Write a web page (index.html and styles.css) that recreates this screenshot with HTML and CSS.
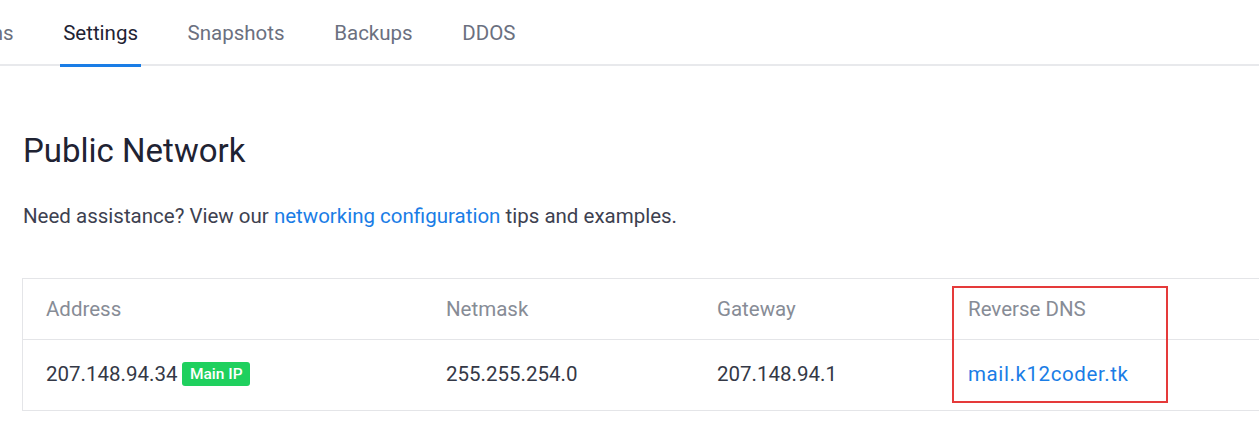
FILE: index.html
```html
<!DOCTYPE html>
<html>
<head>
<meta charset="utf-8">
<link rel="stylesheet" href="styles.css">
</head>
<body>
<nav class="tabs">
  <a class="tab">Usage Graphs</a>
  <a class="tab active">Settings</a>
  <a class="tab">Snapshots</a>
  <a class="tab">Backups</a>
  <a class="tab">DDOS</a>
</nav>
<main class="content">
  <h1 class="title">Public Network</h1>
  <p class="help">Need assistance? View our <a class="link">networking configuration</a> tips and examples.</p>
  <div class="table">
    <div class="row head">
      <div class="cell c1">Address</div>
      <div class="cell c2">Netmask</div>
      <div class="cell c3">Gateway</div>
      <div class="cell c4">Reverse DNS</div>
    </div>
    <div class="row body">
      <div class="cell c1">207.148.94.34<span class="badge">Main IP</span></div>
      <div class="cell c2">255.255.254.0</div>
      <div class="cell c3">207.148.94.1</div>
      <div class="cell c4"><a class="link dns">mail.k12coder.tk</a></div>
    </div>
    <div class="highlight"></div>
  </div>
</main>
</body>
</html>
```

FILE: styles.css
```css
html, body {
  margin: 0;
  padding: 0;
  background: #ffffff;
  overflow: hidden;
}
body {
  width: 1259px;
  height: 438px;
  font-family: Roboto, "Liberation Sans", sans-serif;
  color: #2b2f3a;
}
.tabs {
  display: flex;
  gap: 43.6px;
  height: 64px;
  border-bottom: 2px solid #e8e9ec;
  margin-left: -117px;
}
.tab {
  display: flex;
  align-items: center;
  padding: 2px 3px 0 3px;
  height: 67px;
  margin-bottom: -3px;
  box-sizing: border-box;
  font-size: 20.5px;
  color: #6b7080;
  border-bottom: 3px solid transparent;
  line-height: 1;
  white-space: nowrap;
}
.tab.active {
  color: #1f2333;
  border-bottom-color: #1a7de6;
}
.content {
  padding-left: 23px;
}
.title {
  margin: 65px 0 0 0;
  font-size: 33px;
  font-weight: 400;
  line-height: 40px;
  color: #1f2333;
}
.help {
  margin: 33px 0 0 0;
  font-size: 20.5px;
  line-height: 24px;
  color: #3d4150;
}
.link {
  color: #1a7de6;
  text-decoration: none;
}
.table {
  position: relative;
  margin-top: 50px;
  margin-left: -1px;
  width: 1300px;
  border: 1px solid #e4e5e8;
  border-right: none;
}
.row {
  display: flex;
  align-items: center;
}
.row.head {
  height: 60px;
  border-bottom: 1px solid #e4e5e8;
  color: #878c96;
}
.row.body {
  height: 70px;
  color: #343846;
}
.cell {
  font-size: 20.5px;
  display: flex;
  align-items: center;
}
.row.body .cell {
  padding-bottom: 2px;
}
.c1 { width: 400px; padding-left: 23px; }
.c2 { width: 271px; }
.c3 { width: 251px; }
.c4 { flex: 1; }
.dns {
  letter-spacing: 0.6px;
}
.badge {
  margin-left: 5px;
  background: #1fd05e;
  color: #ffffff;
  font-size: 15.5px;
  font-weight: 500;
  padding: 0 7.5px;
  height: 24px;
  line-height: 24px;
  border-radius: 3px;
}
.highlight {
  position: absolute;
  left: 929px;
  top: 7px;
  width: 212px;
  height: 113px;
  border: 2px solid #e53a3a;
}
```
